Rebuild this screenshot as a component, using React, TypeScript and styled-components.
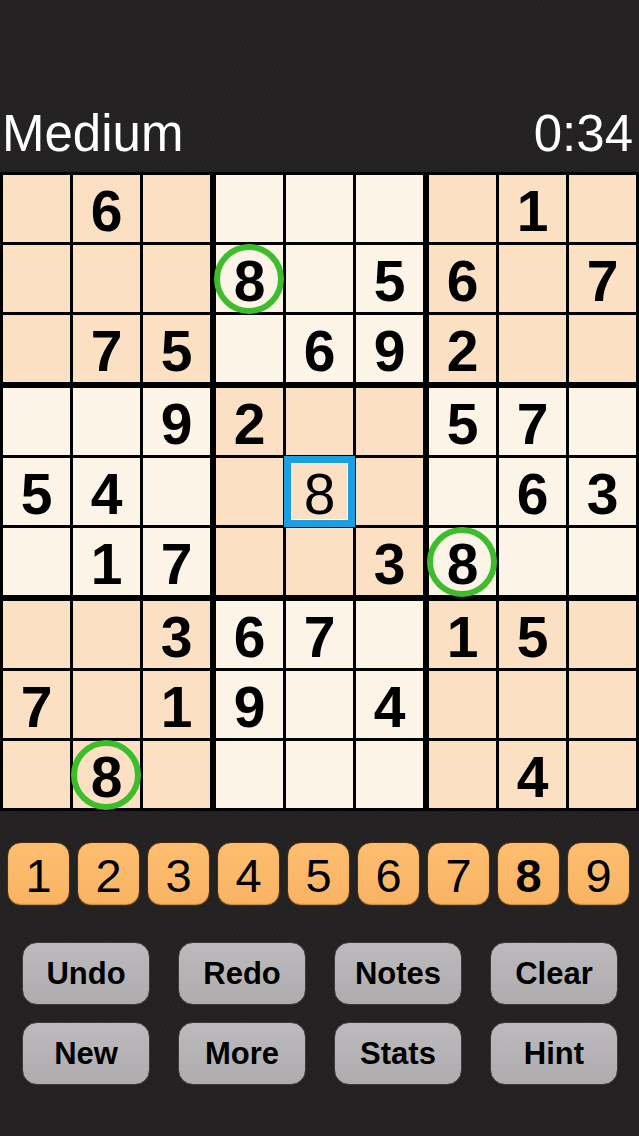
import styled, { createGlobalStyle } from 'styled-components';

const GlobalStyle = createGlobalStyle`
  html, body {
    margin: 0;
    padding: 0;
    background: #232122;
  }
  body {
    font-family: 'Liberation Sans', Arial, Helvetica, sans-serif;
  }
`;

const Screen = styled.div`
  width: 639px;
  height: 1136px;
  overflow: hidden;
  background-color: #232122;
  background-image:
    repeating-linear-gradient(37deg, rgba(255, 255, 255, 0.015) 0 1px, transparent 1px 3px),
    repeating-linear-gradient(-53deg, rgba(0, 0, 0, 0.06) 0 1px, transparent 1px 4px);
  display: flex;
  flex-direction: column;
`;

const Header = styled.div`
  height: 172px;
  box-sizing: border-box;
  display: flex;
  align-items: flex-end;
  justify-content: space-between;
  padding: 0 6px 13px 2px;
  color: #fff;
  font-size: 51px;
  line-height: 51px;
`;

const Board = styled.div`
  background: #000;
  padding: 3px;
  display: grid;
  grid-template-columns: repeat(3, 207px);
  grid-template-rows: repeat(3, 207px);
  gap: 6px;
`;

const Box = styled.div`
  display: grid;
  grid-template-columns: repeat(3, 67px);
  grid-template-rows: repeat(3, 67px);
  gap: 3px;
`;

const Cell = styled.div<{ $shade: boolean }>`
  position: relative;
  background: ${(p) => (p.$shade ? '#fce0c3' : '#fdf4e8')};
  display: flex;
  align-items: center;
  justify-content: center;
  font-size: 57px;
  font-weight: 700;
  color: #000;
  line-height: 1;
  padding-top: 5px;
  box-sizing: border-box;
`;

const Digit = styled.span<{ $plain?: boolean }>`
  position: relative;
  z-index: 2;
  font-weight: ${(p) => (p.$plain ? 400 : 700)};
`;

const Ring = styled.div`
  position: absolute;
  left: -2px;
  top: -1px;
  width: 70px;
  height: 70px;
  box-sizing: border-box;
  border-radius: 50%;
  border: 6px solid #3dbd2b;
  z-index: 1;
`;

const Selected = styled.div`
  position: absolute;
  left: -2px;
  top: -2px;
  right: -2px;
  bottom: -2px;
  border: 7px solid #1a9fe0;
  box-shadow: inset 0 0 0 1px rgba(255, 255, 255, 0.7);
  z-index: 1;
`;

const Pad = styled.div`
  display: grid;
  grid-template-columns: repeat(9, 63px);
  gap: 7px;
  padding: 31px 0 0 7px;
`;

const PadKey = styled.div<{ $active?: boolean }>`
  height: 64px;
  box-sizing: border-box;
  border-radius: 14px;
  background: linear-gradient(#fdbd6f, #f8b463);
  border: 1px solid #4a2e0c;
  box-shadow: inset 0 -1px 1px rgba(120, 70, 10, 0.4);
  display: flex;
  align-items: center;
  justify-content: center;
  font-size: 47px;
  line-height: 1;
  padding-top: 3px;
  font-weight: ${(p) => (p.$active ? 700 : 400)};
  color: #000;
`;

const Actions = styled.div`
  display: grid;
  grid-template-columns: repeat(4, 128px);
  column-gap: 28px;
  row-gap: 17px;
  padding: 36px 0 0 22px;
`;

const ActionButton = styled.div`
  height: 63px;
  box-sizing: border-box;
  border-radius: 15px;
  background: linear-gradient(#bcbabc, #aeacae);
  border: 1.5px solid #3c3b3c;
  display: flex;
  align-items: center;
  justify-content: center;
  font-size: 31px;
  font-weight: 700;
  color: #000;
  padding-top: 1px;
`;

type Mark = 'g' | 's' | undefined;
type Entry = [number, Mark?];

// 9x9 puzzle, 0 = empty, g = circled, s = selected
const rows: Entry[][] = [
  [[0], [6], [0], [0], [0], [0], [0], [1], [0]],
  [[0], [0], [0], [8, 'g'], [0], [5], [6], [0], [7]],
  [[0], [7], [5], [0], [6], [9], [2], [0], [0]],
  [[0], [0], [9], [2], [0], [0], [5], [7], [0]],
  [[5], [4], [0], [0], [8, 's'], [0], [0], [6], [3]],
  [[0], [1], [7], [0], [0], [3], [8, 'g'], [0], [0]],
  [[0], [0], [3], [6], [7], [0], [1], [5], [0]],
  [[7], [0], [1], [9], [0], [4], [0], [0], [0]],
  [[0], [8, 'g'], [0], [0], [0], [0], [0], [4], [0]],
];

const actions = ['Undo', 'Redo', 'Notes', 'Clear', 'New', 'More', 'Stats', 'Hint'];

const App = () => {
  const boxes = [];
  for (let br = 0; br < 3; br++) {
    for (let bc = 0; bc < 3; bc++) {
      const shade = (br + bc) % 2 === 0;
      const cells = [];
      for (let r = 0; r < 3; r++) {
        for (let c = 0; c < 3; c++) {
          const [value, mark] = rows[br * 3 + r][bc * 3 + c];
          cells.push(
            <Cell key={`${r}-${c}`} $shade={shade}>
              {mark === 'g' && <Ring />}
              {mark === 's' && <Selected />}
              {value > 0 && <Digit $plain={mark === 's'}>{value}</Digit>}
            </Cell>
          );
        }
      }
      boxes.push(<Box key={`${br}-${bc}`}>{cells}</Box>);
    }
  }

  return (
    <Screen>
      <GlobalStyle />
      <Header>
        <span>Medium</span>
        <span>0:34</span>
      </Header>
      <Board>{boxes}</Board>
      <Pad>
        {[1, 2, 3, 4, 5, 6, 7, 8, 9].map((n) => (
          <PadKey key={n} $active={n === 8}>
            {n}
          </PadKey>
        ))}
      </Pad>
      <Actions>
        {actions.map((a) => (
          <ActionButton key={a}>{a}</ActionButton>
        ))}
      </Actions>
    </Screen>
  );
};

export default App;
